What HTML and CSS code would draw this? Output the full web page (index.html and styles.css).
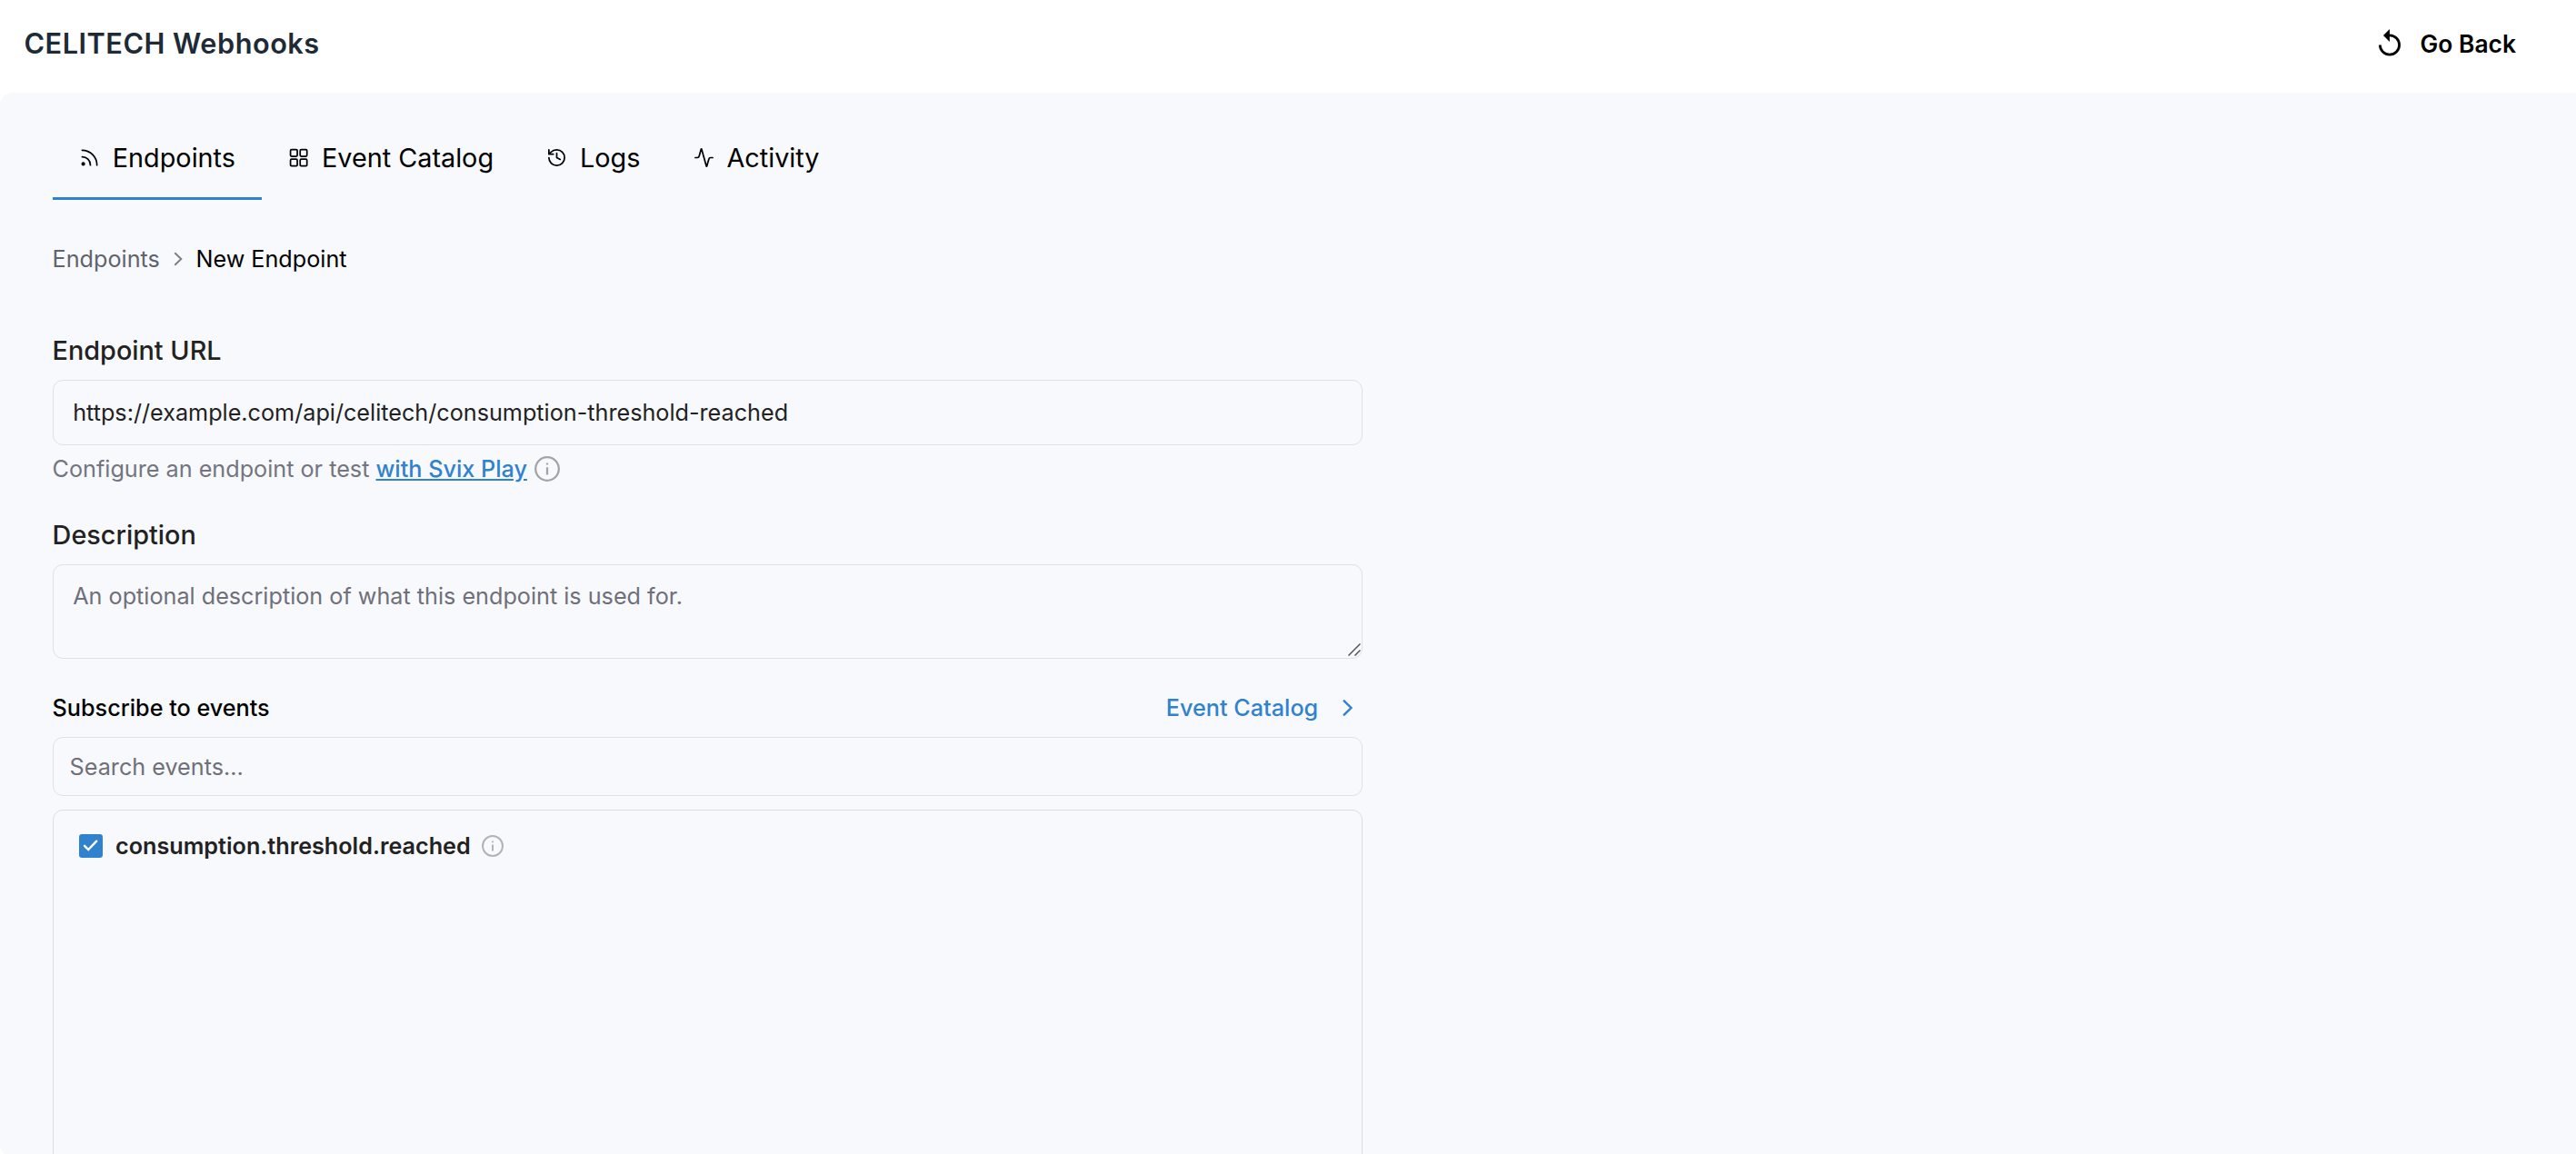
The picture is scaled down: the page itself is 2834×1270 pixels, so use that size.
FILE: index.html
```html
<!DOCTYPE html>
<html lang="en">
<head>
<meta charset="utf-8">
<title>CELITECH Webhooks</title>
<link rel="stylesheet" href="styles.css">
</head>
<body>
<header class="header">
  <h1 class="brand">CELITECH Webhooks</h1>
  <button class="go-back" type="button">
    <svg class="go-back-icon" viewBox="0 0 24 30" fill="none"><path d="M1.4 17.5a10.6 10.6 0 1 0 10.6-10.6" stroke="currentColor" stroke-width="2.8"/><path d="M12 0v14L5 7z" fill="currentColor"/></svg>
    <span class="go-back-label">Go Back</span>
  </button>
</header>
<main class="panel">
  <nav class="tabs">
    <a class="tab tab-active"><svg class="tab-icon" viewBox="0 0 24 24"><path d="M3.5 11a9.5 9.5 0 0 1 9.5 9.5M3.5 3.5a17 17 0 0 1 17 17"/><circle cx="4.8" cy="19.2" r="1.3" fill="currentColor"/></svg><span>Endpoints</span></a>
    <a class="tab"><svg class="tab-icon" viewBox="0 0 24 24"><rect x="2.7" y="2.7" width="7.8" height="7.8" rx="1.3"/><rect x="13.8" y="2.7" width="7.8" height="7.8" rx="1.3"/><rect x="2.7" y="13.8" width="7.8" height="7.8" rx="1.3"/><rect x="13.8" y="13.8" width="7.8" height="7.8" rx="1.3"/></svg><span>Event Catalog</span></a>
    <a class="tab"><svg class="tab-icon" viewBox="0 0 24 24"><path d="M3 12a9 9 0 1 0 9-9 9.75 9.75 0 0 0-6.74 2.74L3 8M3 3v5h5M12 7v5l4 2"/></svg><span>Logs</span></a>
    <a class="tab"><svg class="tab-icon" viewBox="0 0 24 24"><path d="M22 12h-2.48a2 2 0 0 0-1.93 1.46l-2.35 8.36a.25.25 0 0 1-.48 0L9.24 2.18a.25.25 0 0 0-.48 0l-2.35 8.36A2 2 0 0 1 4.49 12H2"/></svg><span>Activity</span></a>
  </nav>
  <div class="breadcrumb">
    <a class="crumb">Endpoints</a>
    <svg class="crumb-chevron" viewBox="0 0 10 16"><path d="M1.3 1.3 8.3 8l-7 6.7"/></svg>
    <span>New Endpoint</span>
  </div>
  <form class="form">
    <label class="label" for="url">Endpoint URL</label>
    <input class="field url" id="url" type="text" value="https://example.com/api/celitech/consumption-threshold-reached">
    <div class="helper">
      <span>Configure an endpoint or test <a class="link">with Svix Play</a></span>
      <svg class="info" viewBox="0 0 28 28"><circle cx="14" cy="14" r="12.8"/><path d="M14 12.3v8.2M14 7.6v2"/></svg>
    </div>
    <label class="label label-description" for="description">Description</label>
    <div class="textarea-wrap">
      <textarea class="field description" id="description" placeholder="An optional description of what this endpoint is used for."></textarea>
      <svg class="grip" viewBox="0 0 14 14"><path d="M.5 13.5l13-13M7.5 13.5l6-6"/></svg>
    </div>
    <div class="events-head">
      <span class="events-title">Subscribe to events</span>
      <a class="catalog">Event Catalog<svg class="catalog-chevron" viewBox="0 0 12 18"><path d="M1.7 1.3 9.5 9l-7.8 7.7"/></svg></a>
    </div>
    <input class="field search" type="text" placeholder="Search events...">
    <div class="events">
      <div class="event">
        <svg class="check" viewBox="0 0 26 26"><rect width="26" height="26" rx="3.2" fill="#3182ce"/><path d="M6 12.8l4.2 4.2 9-9.3" fill="none" stroke="#fff" stroke-width="2.4" stroke-linecap="round"/></svg>
        <span class="event-name">consumption.threshold.reached</span>
        <svg class="info info-small" viewBox="0 0 28 28"><circle cx="14" cy="14" r="12.8"/><path d="M14 12.3v8.2M14 7.6v2"/></svg>
      </div>
    </div>
  </form>
</main>
</body>
</html>
```

FILE: styles.css
```css
* { box-sizing: border-box; }

body {
  margin: 0;
  height: 1270px;
  overflow: hidden;
  background: #fff;
  color: #000;
  font: 400 25.2px/36px Inter, "Liberation Sans", sans-serif;
}

.header {
  display: flex;
  justify-content: space-between;
  align-items: center;
  height: 102px;
  padding: 0 66px 7px 26.5px;
}

.brand {
  margin: 0;
  color: #1f2a37;
  font-size: 30.7px;
  font-weight: 600;
  line-height: 40px;
  letter-spacing: 0.5px;
}

.go-back {
  display: flex;
  align-items: center;
  gap: 21.5px;
  padding: 0;
  border: 0;
  background: none;
  color: #000;
  font: inherit;
  font-size: 26.4px;
  font-weight: 600;
}

.go-back-icon { width: 24px; height: 30px; margin-bottom: 2px; }

.panel {
  height: 1171px;
  padding: 28px 57.6px 0;
  overflow: hidden;
  border-radius: 14px 0 0 14px;
  background: #f8f9fd;
}

.tabs { display: flex; }

.tab {
  display: flex;
  align-items: center;
  gap: 13.6px;
  height: 90px;
  padding: 0 28.8px 0 29.6px;
  border-bottom: 3px solid transparent;
  font-size: 28.8px;
}

.tab-active { border-color: #3182ce; }

.tab-icon {
  width: 23px;
  height: 23px;
  fill: none;
  stroke: currentColor;
  stroke-width: 1.8;
  stroke-linecap: round;
  stroke-linejoin: round;
}

.breadcrumb {
  display: flex;
  align-items: center;
  margin-top: 47px;
}

.crumb { color: #60646c; }

.crumb-chevron {
  width: 10px;
  height: 16px;
  margin: 0 14.6px 0 15px;
  fill: none;
  stroke: #7c7c84;
  stroke-width: 1.9;
}

.form {
  display: flex;
  flex-direction: column;
  width: 1441px;
  margin-top: 63px;
}

.label {
  margin-bottom: 12px;
  color: #222;
  font-size: 28.8px;
  font-weight: 500;
  line-height: 40px;
}

.label-description { margin-top: 35px; }

.field {
  display: block;
  width: 100%;
  margin: 0;
  border: 1px solid #e0e1e6;
  border-radius: 11px;
  outline: 0;
  background: transparent;
  color: #222;
  font: inherit;
}

.field::placeholder { color: #6f7079; opacity: 1; }

.url { height: 72px; padding: 0 21.6px; }

.helper {
  display: flex;
  align-items: center;
  gap: 8px;
  margin-top: 8px;
  color: #737580;
}

.link {
  color: #3182ce;
  font-weight: 500;
  text-decoration: underline;
}

.info {
  width: 28px;
  height: 28px;
  fill: none;
  stroke: #a3a3a8;
  stroke-width: 2.3;
}

.textarea-wrap { position: relative; }

.description {
  height: 104px;
  padding: 16px 21.6px;
  resize: none;
}

.grip {
  position: absolute;
  right: 2px;
  bottom: 3px;
  width: 14px;
  height: 14px;
  fill: none;
  stroke: #55565a;
  stroke-width: 1.5;
}

.events-head {
  display: flex;
  justify-content: space-between;
  margin-top: 36px;
  font-weight: 500;
}

.catalog {
  display: flex;
  align-items: center;
  gap: 27px;
  padding-right: 9.4px;
  color: #3182ce;
}

.catalog-chevron {
  width: 12px;
  height: 18px;
  fill: none;
  stroke: currentColor;
  stroke-width: 2.4;
  stroke-linecap: round;
}

.search { height: 65px; margin-top: 14px; padding: 0 18px; }

.events {
  height: 420px;
  margin-top: 15px;
  padding: 21px 28.4px;
  border: 1px solid #dddee4;
  border-radius: 11px;
}

.event { display: flex; align-items: center; }

.check { width: 26px; height: 26px; }

.event-name {
  margin: 0 12px 0 14px;
  color: #222;
  font-weight: 600;
}

.info-small { width: 24px; height: 24px; stroke: #b3b3b7; }
```
